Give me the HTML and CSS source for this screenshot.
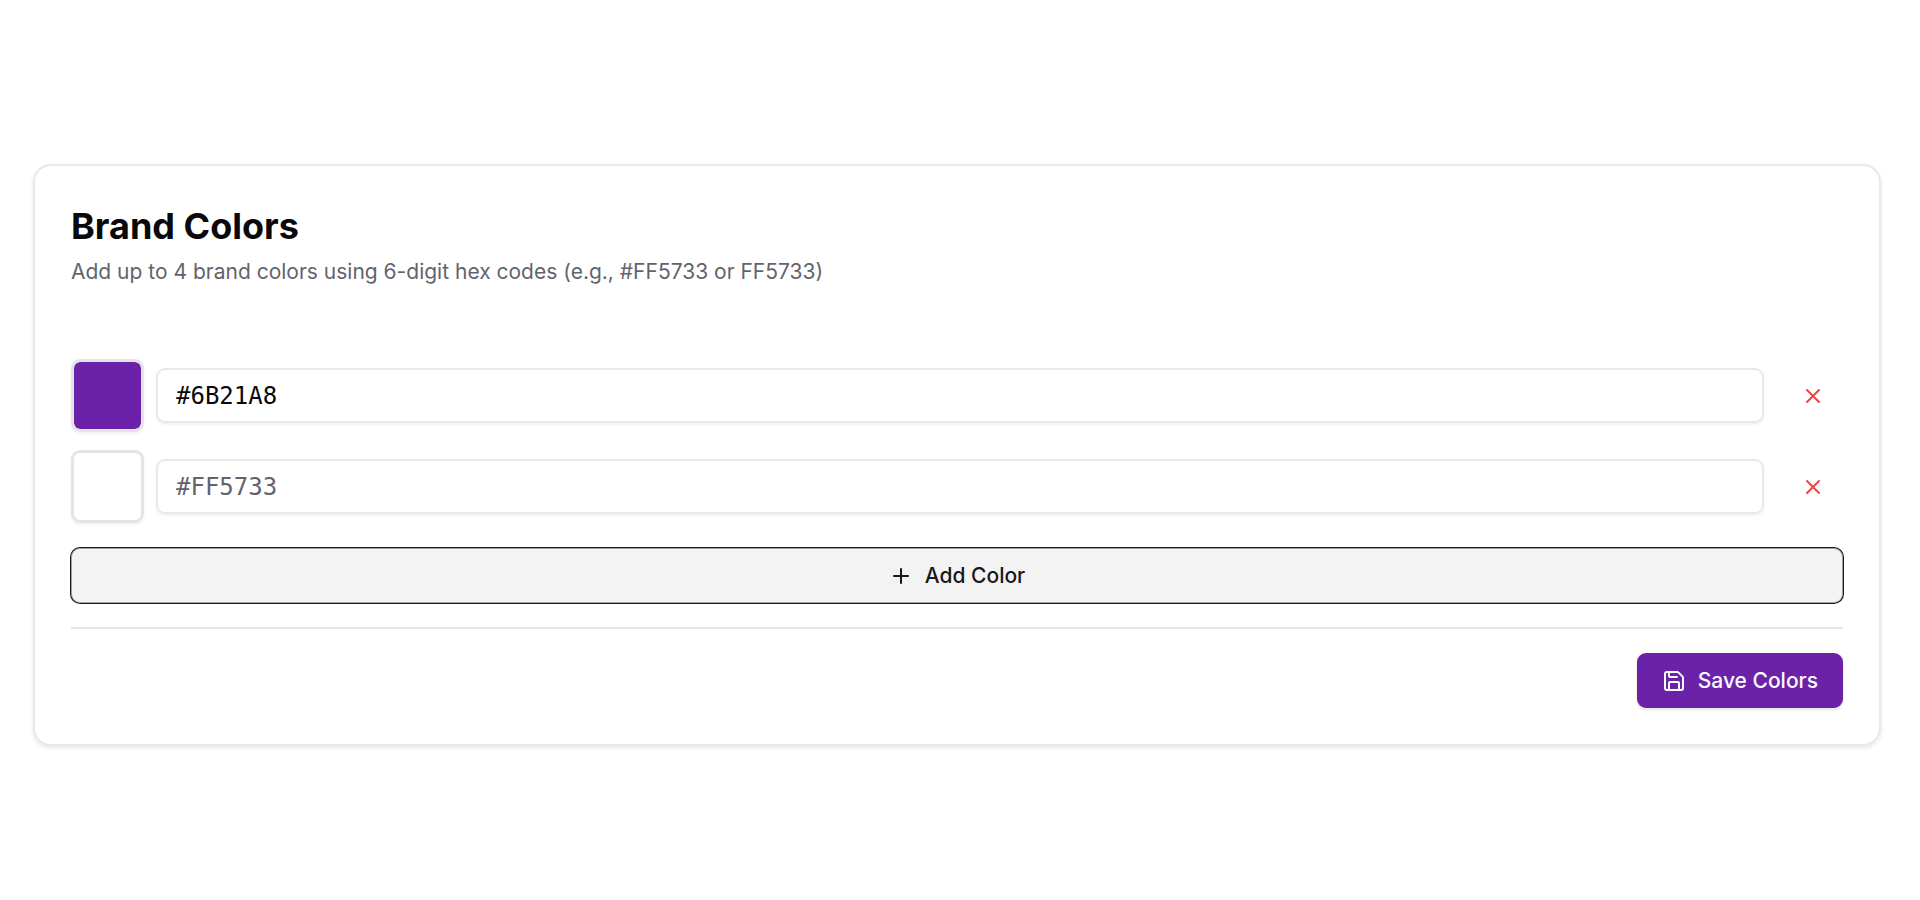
FILE: index.html
```html
<!DOCTYPE html>
<html lang="en">
<head>
    <meta charset="UTF-8">
    <meta name="viewport" content="width=device-width, initial-scale=1.0">
    <title>Brand Colors</title>
    <link rel="stylesheet" href="styles.css">
</head>
<body>
    <main class="card">
        <header class="card-header">
            <h1>Brand Colors</h1>
            <p>Add up to 4 brand colors using 6-digit hex codes (e.g., #FF5733 or FF5733)</p>
        </header>

        <form class="color-form">
            <div class="color-list">
                <div class="color-row">
                    <div class="swatch swatch-purple"></div>
                    <input class="hex-input" type="text" value="#6B21A8" placeholder="#FF5733" aria-label="Brand color 1">
                    <button class="remove-button" type="button" aria-label="Remove color 1">
                        <svg class="icon" viewBox="0 0 24 24"><path d="M18 6 6 18M6 6l12 12"/></svg>
                    </button>
                </div>
                <div class="color-row">
                    <div class="swatch"></div>
                    <input class="hex-input" type="text" placeholder="#FF5733" aria-label="Brand color 2">
                    <button class="remove-button" type="button" aria-label="Remove color 2">
                        <svg class="icon" viewBox="0 0 24 24"><path d="M18 6 6 18M6 6l12 12"/></svg>
                    </button>
                </div>
            </div>

            <button class="button add-button" type="button">
                <svg class="icon" viewBox="0 0 24 24"><path d="M5 12h14M12 5v14"/></svg>
                Add Color
            </button>

            <div class="form-footer">
                <button class="button save-button" type="submit">
                    <svg class="icon" viewBox="0 0 24 24">
                        <path d="M15.2 3a2 2 0 0 1 1.4.6l3.8 3.8a2 2 0 0 1 .6 1.4V19a2 2 0 0 1-2 2H5a2 2 0 0 1-2-2V5a2 2 0 0 1 2-2z"/>
                        <path d="M17 21v-7a1 1 0 0 0-1-1H8a1 1 0 0 0-1 1v7"/>
                        <path d="M7 3v4a1 1 0 0 0 1 1h7"/>
                    </svg>
                    Save Colors
                </button>
            </div>
        </form>
    </main>
</body>
</html>
```

FILE: styles.css
```css
* {
    margin: 0;
    padding: 0;
    box-sizing: border-box;
}

body {
    font-family: Inter, sans-serif;
    background: #fff;
    color: #09090b;
    padding: 164px 39px 40px 33px;
}

.card {
    padding: 36px;
    border: 2px solid #e9e9eb;
    border-radius: 18px;
    box-shadow: 0 2px 4px rgba(0, 0, 0, 0.1);
}

.card-header {
    margin-bottom: 71px;
}

h1 {
    font-size: 36px;
    font-weight: 700;
    line-height: 48px;
    margin-bottom: 6px;
}

.card-header p {
    font-size: 21px;
    line-height: 32px;
    color: #63636e;
}

.color-list {
    display: flex;
    flex-direction: column;
    gap: 18px;
    margin-bottom: 25px;
}

.color-row {
    display: flex;
    align-items: center;
}

.swatch {
    flex: none;
    width: 73px;
    height: 73px;
    margin-right: 12px;
    border: 3px solid #e4e4e7;
    border-radius: 9px;
    background-clip: padding-box;
    box-shadow: 0 2px 3px rgba(0, 0, 0, 0.05);
}

.swatch-purple {
    background-color: #6b21a8;
}

.hex-input {
    flex: 1;
    min-width: 0;
    height: 55px;
    margin-right: 18px;
    padding: 0 18px;
    border: 2px solid #e9e9eb;
    border-radius: 9px;
    background: #fff;
    color: #09090b;
    font-family: "DejaVu Sans Mono", monospace;
    font-size: 24px;
    box-shadow: 0 2px 3px rgba(0, 0, 0, 0.05);
}

.hex-input::placeholder {
    color: #63636e;
    opacity: 1;
}

.icon {
    width: 24px;
    height: 24px;
    fill: none;
    stroke: currentColor;
    stroke-width: 2;
    stroke-linecap: round;
    stroke-linejoin: round;
}

.remove-button {
    display: flex;
    align-items: center;
    justify-content: center;
    width: 61px;
    height: 55px;
    border: none;
    border-radius: 9px;
    background: none;
    color: #ef4444;
    cursor: pointer;
}

.button {
    display: flex;
    align-items: center;
    justify-content: center;
    gap: 12px;
    height: 55px;
    padding: 0 25px;
    border: none;
    border-radius: 9px;
    font-family: inherit;
    font-size: 21px;
    font-weight: 500;
    cursor: pointer;
}

.add-button {
    width: 100%;
    border: 1px solid #a1a1a3;
    background: #f3f3f3;
    color: #18181b;
    box-shadow: 0 0 0 1px #18181b;
}

.form-footer {
    display: flex;
    justify-content: flex-end;
    margin-top: 24px;
    padding-top: 24px;
    border-top: 2px solid #e4e4e7;
}

.save-button {
    background: #6b21a8;
    color: #fafafa;
    box-shadow: 0 2px 3px rgba(0, 0, 0, 0.1);
}

.remove-button:hover {
    background: #fef2f2;
}

.save-button:hover {
    background: #581c87;
}
```
